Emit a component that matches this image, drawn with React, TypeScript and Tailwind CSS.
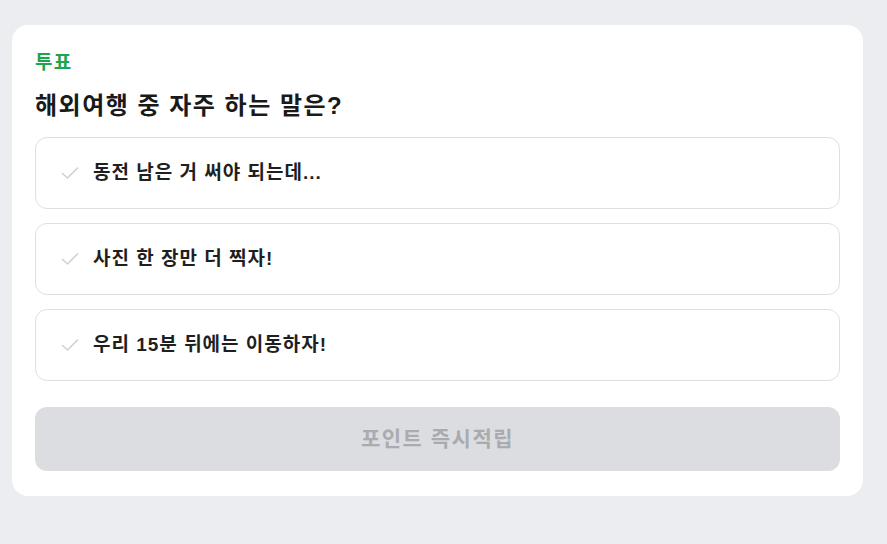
import React from "react";

const options = ["동전 남은 거 써야 되는데...", "사진 한 장만 더 찍자!", "우리 15분 뒤에는 이동하자!"];

function Check() {
  return (
    <svg width="18" height="14" viewBox="0 0 18 14" fill="none">
      <path d="M1.5 7.5 L6.5 12 L16.5 2" stroke="#cfd1d4" strokeWidth="1.6" strokeLinecap="round" strokeLinejoin="round" />
    </svg>
  );
}

export default function App() {
  return (
    <div
      className="w-[887px] h-[544px] bg-[#ecedf0] pt-[25px] pl-[12px]"
      style={{ fontFamily: '"Liberation Sans", "Noto Sans CJK KR", sans-serif' }}
    >
      <div className="w-[851px] bg-white rounded-[16px] px-[23px] pt-[26px] pb-[25px]">
        <div className="text-[19px] leading-[24px] font-bold tracking-[1.2px] text-[#1ca54b]">투표</div>
        <div className="mt-[17px] text-[24px] leading-[28px] font-bold tracking-[1.5px] text-[#1a1a1a]">해외여행 중 자주 하는 말은?</div>
        <div className="mt-[17px] flex flex-col gap-[14px]">
          {options.map((o) => (
            <div key={o} className="h-[72px] border border-[#dedfe2] rounded-[12px] flex items-center pl-[25px]">
              <Check />
              <span className="ml-[14px] text-[19px] font-bold tracking-[1px] text-[#1f1f1f]">{o}</span>
            </div>
          ))}
        </div>
        <div className="mt-[26px] h-[64px] rounded-[12px] bg-[#dcdde0] flex items-center justify-center text-[21px] font-bold tracking-[1.5px] text-[#a9abae]">
          포인트 즉시적립
        </div>
      </div>
    </div>
  );
}
